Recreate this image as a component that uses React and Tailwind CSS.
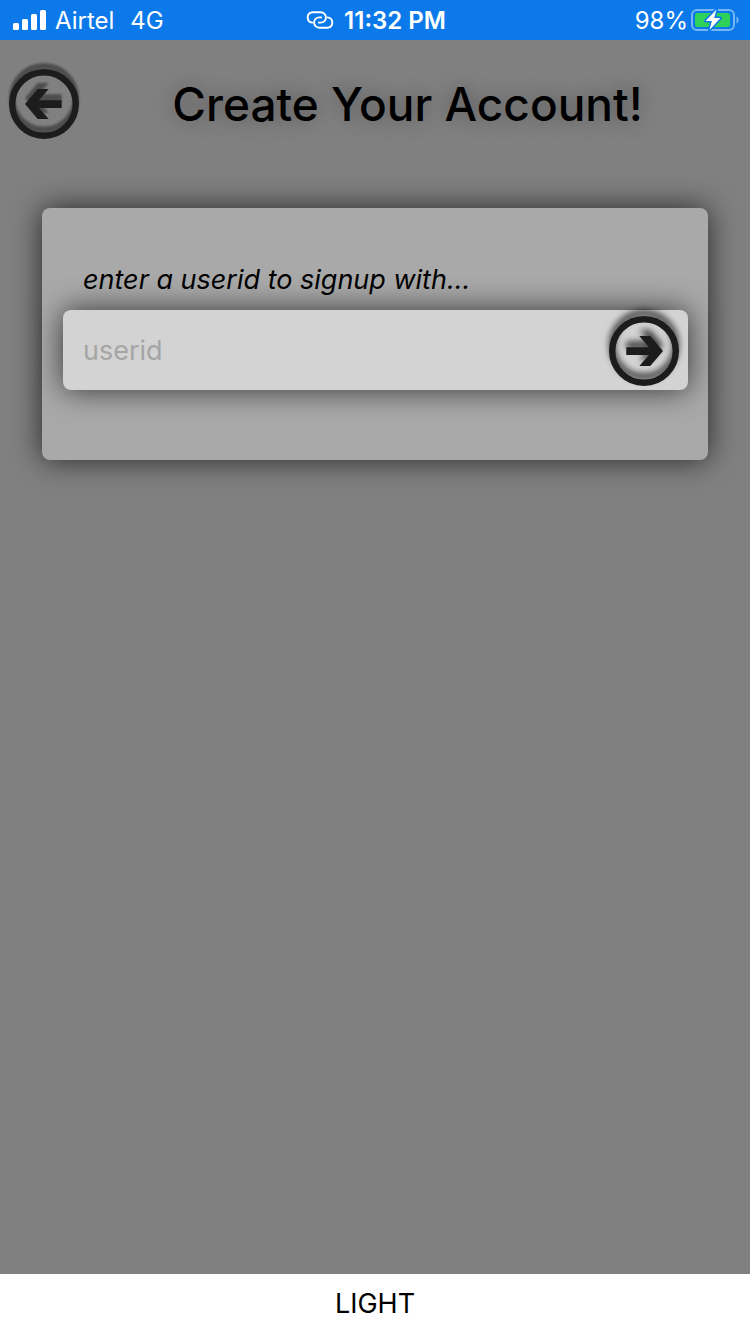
import React from "react";

function SignalBars() {
  return (
    <svg className="h-6 w-[34px]" viewBox="0 0 34 24" fill="white" aria-hidden="true">
      <rect x="0" y="14" width="6" height="7" rx="1.5" />
      <rect x="9" y="10" width="6" height="11" rx="1.5" />
      <rect x="18" y="5" width="6" height="16" rx="1.5" />
      <rect x="27" y="1" width="6" height="20" rx="1.5" />
    </svg>
  );
}

function HotspotLink() {
  return (
    <svg className="h-5 w-7" viewBox="0 0 28 20" fill="none" stroke="white" strokeWidth="1.9" strokeLinecap="round" aria-hidden="true">
      <path d="M6.200 11.600A5.200 5.200 0 0 1 6.200 1.300H14.800A5.150 5.150 0 0 1 14.800 11.600H12.800" />
      <path d="M21.800 6.400A5.200 5.200 0 0 1 21.800 16.700H13.200A5.150 5.150 0 0 1 13.200 6.400H15.200" />
    </svg>
  );
}

function Battery() {
  return (
    <svg className="h-6 w-12" viewBox="0 0 48 24" aria-hidden="true">
      <rect x="1" y="1" width="42" height="20" rx="5" fill="none" stroke="white" strokeOpacity="0.45" strokeWidth="2" />
      <path d="M45.500 7.500C48.300 8.500 48.300 13.500 45.500 14.500Z" fill="white" fillOpacity="0.45" />
      <rect x="4" y="4" width="35" height="14" rx="2.500" fill="#30d158" />
      <path d="M25.500 0.500L14.500 12H20.800L18.500 21L29.500 9H23.200Z" fill="white" stroke="#0b79e9" strokeWidth="3" strokeLinejoin="round" paintOrder="stroke" />
    </svg>
  );
}

function CircleArrow({ className }) {
  return (
    <svg className={className} viewBox="0 0 70 70" aria-hidden="true">
      <circle cx="35" cy="35" r="31.800" fill="none" stroke="#1c1c1c" strokeWidth="6.400" />
      <path d="M16 35L28.700 20H39.700L30 31.300H52.700V39H30L39.700 50H28.700Z" fill="#1c1c1c" />
    </svg>
  );
}

export default function App() {
  return (
    <div className="flex min-h-screen flex-col bg-[#808080] font-['Inter','Liberation_Sans',sans-serif] text-black">
      <div className="grid h-10 grid-cols-[1fr_auto_1fr] items-center bg-[#0b79e9] pt-0.5 pr-[11px] pl-[13px] text-2xl text-white">
        <div className="flex items-center gap-2">
          <SignalBars />
          <span>Airtel</span>
          <span className="ml-2">4G</span>
        </div>
        <div className="flex items-center gap-2.5">
          <HotspotLink />
          <span className="font-semibold">11:32 PM</span>
        </div>
        <div className="flex items-center justify-end gap-[3px]">
          <span>98%</span>
          <Battery />
        </div>
      </div>

      <header className="flex items-center pt-[29px] pr-[14px] pl-[9px]">
        <button type="button" aria-label="Back" className="shrink-0">
          <CircleArrow className="size-[70px] drop-shadow-[0_-6px_1px_rgba(0,0,0,0.4)]" />
        </button>
        <h1 className="flex-1 text-center text-[46px] font-medium text-shadow-[0_0_20px_rgba(0,0,0,0.35)]">
          Create Your Account!
        </h1>
      </header>

      <main className="flex-1 px-[42px] pt-[69px]">
        <form className="rounded-lg bg-[#a9a9a9] pt-[52px] pr-5 pb-[70px] pl-[21px] shadow-[0_0_30px_rgba(0,0,0,0.7)]">
          <label htmlFor="userid" className="block px-5 pb-2.5 text-[27px] leading-10 italic">
            enter a userid to signup with...
          </label>
          <div className="flex h-20 items-center rounded-lg bg-[#d3d3d3] pr-[9px] shadow-[0_0_30px_rgba(0,0,0,0.7)]">
            <input
              id="userid"
              type="text"
              placeholder="userid"
              className="h-full min-w-0 flex-1 bg-transparent px-5 text-[27px] outline-none placeholder:text-[#a5a5a5]"
            />
            <button type="button" aria-label="Next" className="shrink-0 pt-0.5">
              <CircleArrow className="size-[70px] -scale-x-100 drop-shadow-[0_-6px_3px_rgba(0,0,0,0.7)]" />
            </button>
          </div>
        </form>
      </main>

      <footer className="flex h-[60px] bg-white">
        <button type="button" className="w-full text-[27px]">LIGHT</button>
      </footer>
    </div>
  );
}
